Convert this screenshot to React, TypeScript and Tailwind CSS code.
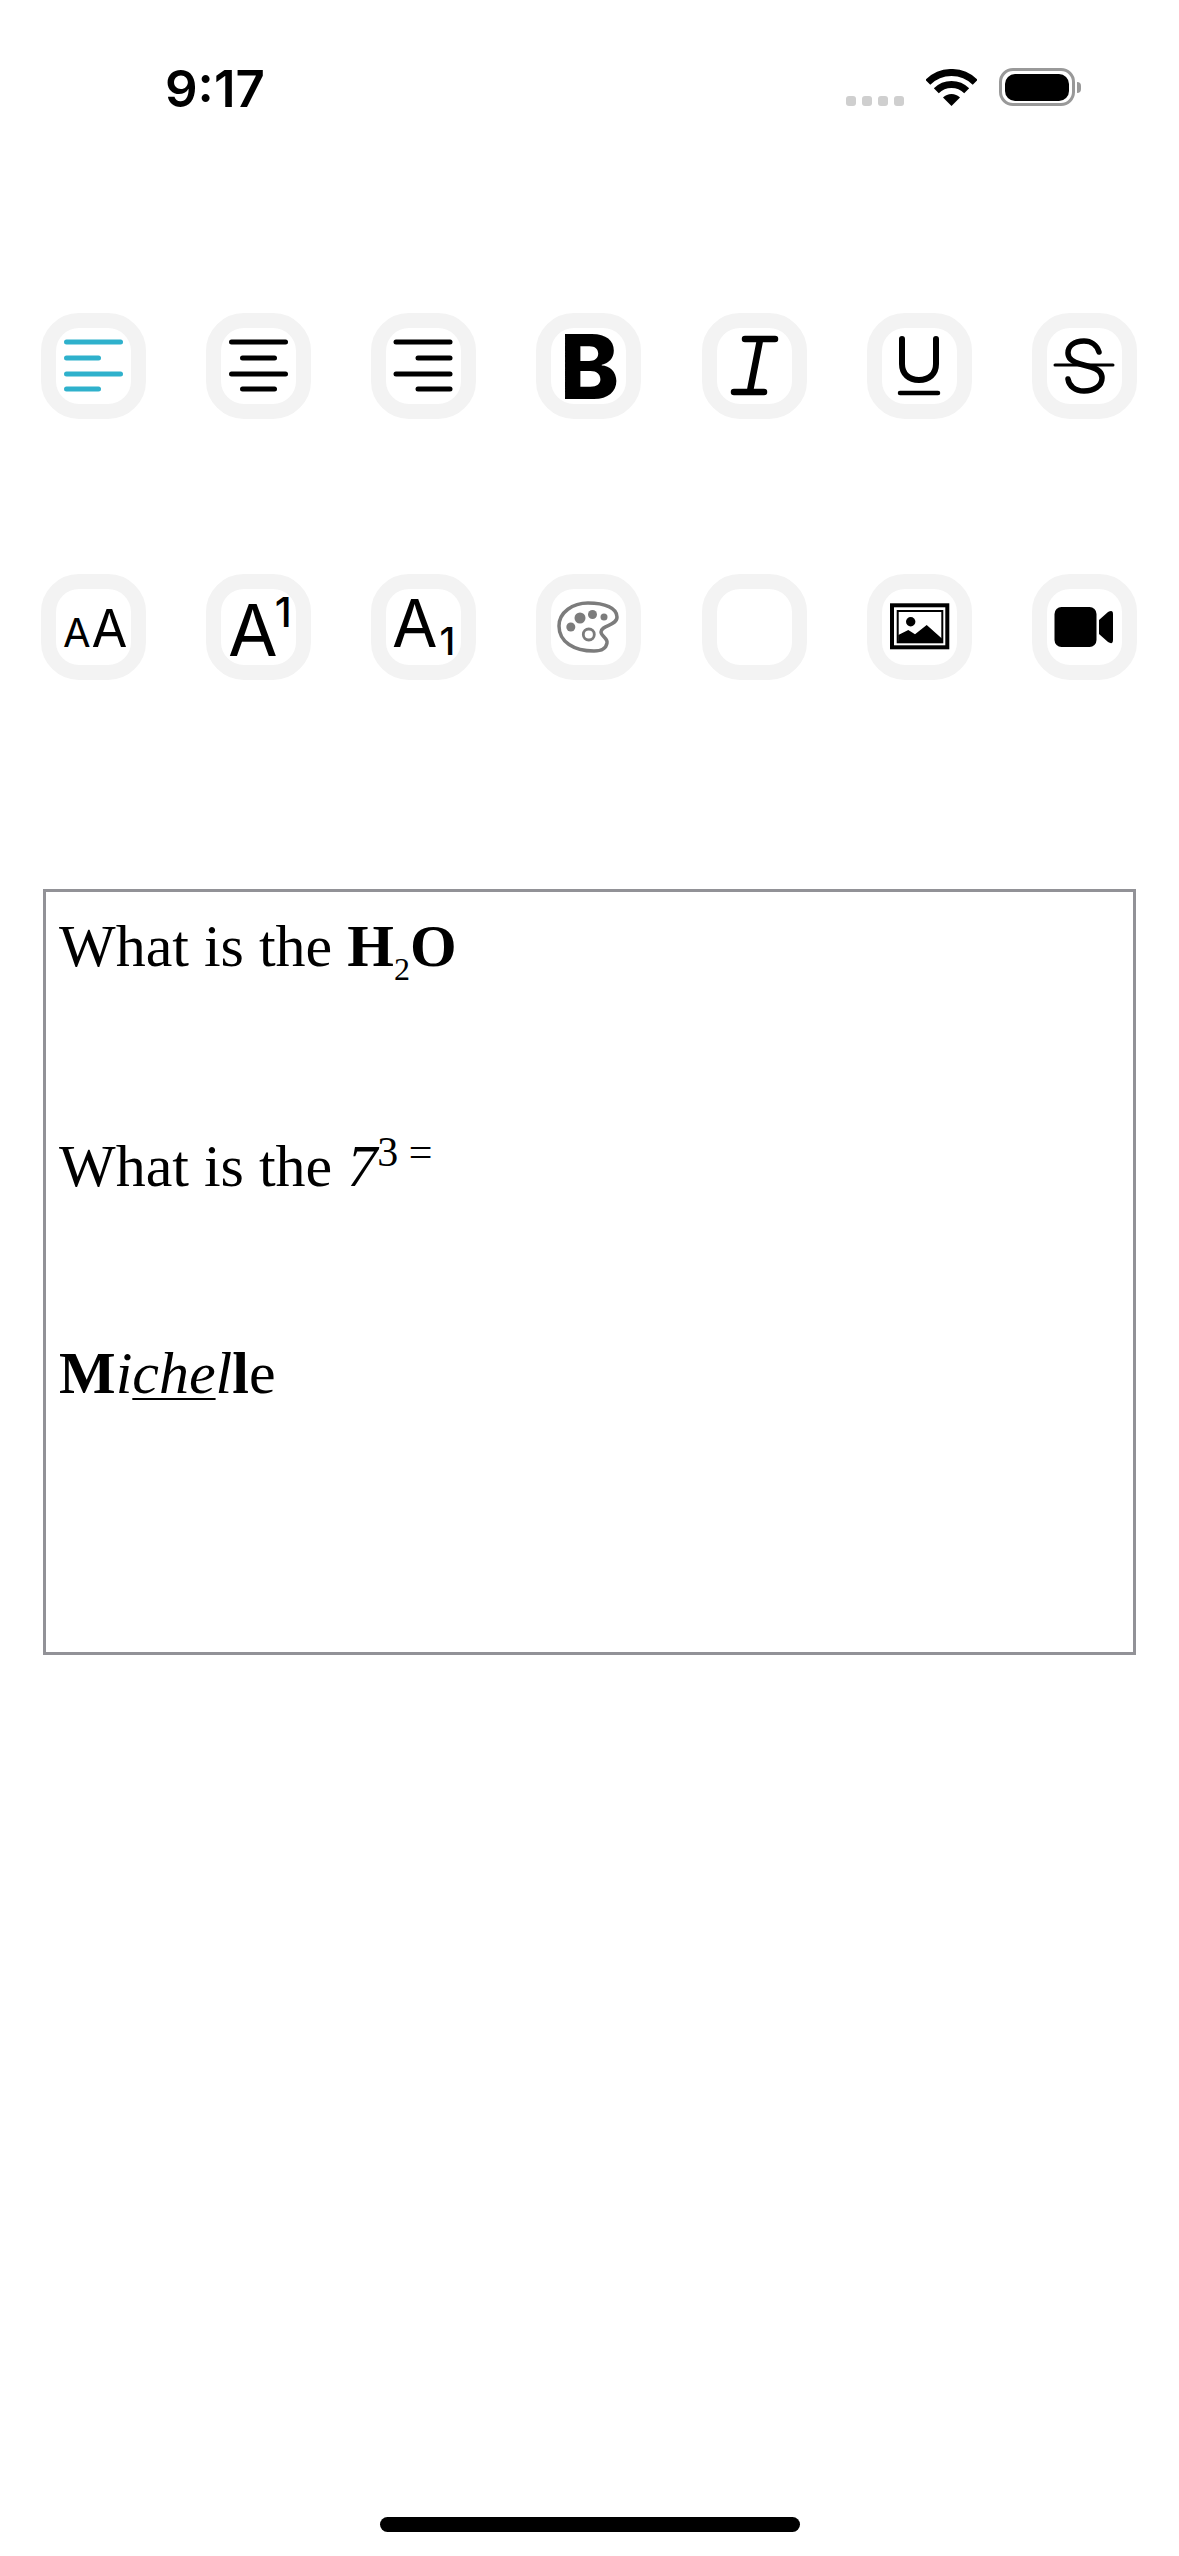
import React from 'react';

const INK = '#000000';

const AlignLines: React.FC<{ starts: number[]; color?: string }> = ({ starts, color = INK }) => (
  <svg viewBox="0 0 76 76" className="block h-[76px] w-[76px]">
    {[0, 1, 2, 3].map((i) => {
      const long = i % 2 === 0;
      const y = [14, 30, 46, 61][i];
      const x = starts[i];
      return <line key={i} x1={x + 2.5} x2={x + (long ? 59 : 37) - 2.5} y1={y} y2={y} stroke={color} strokeWidth={5} strokeLinecap="round" />;
    })}
  </svg>
);

const Icon: React.FC<{ children: React.ReactNode }> = ({ children }) => (
  <svg viewBox="0 0 76 76" className="block h-[76px] w-[76px] overflow-visible">
    {children}
  </svg>
);

const iconFont = '[font-family:Inter,sans-serif]';

const icons: React.ReactNode[][] = [
  [
    <AlignLines starts={[8, 8, 8, 8]} color="#2fb1cc" />,
    <AlignLines starts={[8, 19, 8, 19]} />,
    <AlignLines starts={[7.5, 29.5, 7.5, 29.5]} />,
    <Icon>
      <text x="9" y="71" fontSize="89" fontWeight="800" className={iconFont}>B</text>
    </Icon>,
    <Icon>
      <path d="M28 11H58M17 64H47M43 12L33 63" fill="none" stroke={INK} strokeWidth="6.5" strokeLinecap="round" />
    </Icon>,
    <Icon>
      <path d="M20 11V36C20 46 27 52 37 52C47 52 54 46 54 36V11" fill="none" stroke={INK} strokeWidth="6" strokeLinecap="round" />
      <line x1="18" x2="56" y1="65" y2="65" stroke={INK} strokeWidth="4.5" strokeLinecap="round" />
    </Icon>,
    <Icon>
      <path d="M52 24C50 17 44 13 37 13C27 13 21 18 21 25C21 31 26 34 33 36L44 39C51 41 55 45 55 50C55 58 47 63 37 63C28 63 22 58 21 51" fill="none" stroke={INK} strokeWidth="5.5" strokeLinecap="round" />
      <line x1="8" x2="66" y1="37" y2="37" stroke={INK} strokeWidth="3" strokeLinecap="round" />
    </Icon>,
  ],
  [
    <Icon>
      <text x="7" y="58" className={iconFont}>
        <tspan fontSize="40">A</tspan>
        <tspan fontSize="52" dx="1">A</tspan>
      </text>
    </Icon>,
    <Icon>
      <text x="7" y="67" className={iconFont}>
        <tspan fontSize="72">A</tspan>
        <tspan fontSize="41" fontWeight="500" dx="-3" dy="-29">1</tspan>
      </text>
    </Icon>,
    <Icon>
      <text x="6" y="58" className={iconFont}>
        <tspan fontSize="66">A</tspan>
        <tspan fontSize="38" fontWeight="500" dx="2" dy="8">1</tspan>
      </text>
    </Icon>,
    <Icon>
      <path d="M8 37C8 23 22 14 37 14C54 14 66 19 66 28C66 37 50 36 50 43C50 47 57 49 56 54C55 60 49 62 43 62C23 62 8 53 8 37Z" fill="none" stroke="#7c7c7c" strokeWidth="3.5" />
      <circle cx="29" cy="29" r="5.5" fill="#7c7c7c" />
      <circle cx="41.5" cy="25.5" r="4.5" fill="#7c7c7c" />
      <circle cx="53" cy="28" r="3.5" fill="#7c7c7c" />
      <circle cx="19.8" cy="38" r="4.5" fill="#7c7c7c" />
      <circle cx="37.8" cy="45.5" r="5.5" fill="none" stroke="#7c7c7c" strokeWidth="2.8" />
    </Icon>,
    null,
    <Icon>
      <rect x="10" y="16.3" width="55.3" height="42" fill="none" stroke={INK} strokeWidth="4" />
      <rect x="15.7" y="22" width="44.6" height="31.3" fill="none" stroke={INK} strokeWidth="2" />
      <circle cx="28.7" cy="32.7" r="4.7" fill={INK} />
      <path d="M16.3 46L26.3 41L33 45.3L44.7 36L60.7 50.3V54H16.3Z" fill={INK} />
    </Icon>,
    <Icon>
      <rect x="7.5" y="18" width="42" height="40" rx="7" fill={INK} />
      <path d="M52 31L61 23Q66 20 66 25V51Q66 56 61 53L52 45Z" fill={INK} />
    </Icon>,
  ],
];

const ToolRow: React.FC<{ items: React.ReactNode[]; className: string }> = ({ items, className }) => (
  <div className={`flex justify-between pl-[41px] pr-[42px] ${className}`}>
    {items.map((icon, i) => (
      <div key={i} className="box-border h-[106px] w-[105px] rounded-[38px] border-[15px] border-[#f3f3f3] bg-white">
        {icon}
      </div>
    ))}
  </div>
);

const StatusBar: React.FC = () => (
  <div className="flex h-[120px] pl-[165px] pr-[98px] pt-[59px]">
    <span className="text-[51px] leading-[60px] font-semibold text-black [font-family:Inter,sans-serif]">9:17</span>
    <div className="ml-auto flex items-start">
      <div className="mt-[37px] flex gap-[6px]">
        {[0, 1, 2, 3].map((i) => (
          <span key={i} className="h-[10px] w-[10px] rounded-[3px] bg-[#cfcfcf]" />
        ))}
      </div>
      <svg viewBox="0 0 51 37" className="ml-[22px] mt-[10px] h-[37px] w-[51px]">
        <path d="M25.5 37L17 28.5A12 12 0 0 1 34 28.5Z" fill={INK} />
        <path d="M10.3 21.8A21.5 21.5 0 0 1 40.7 21.8" fill="none" stroke={INK} strokeWidth="7" />
        <path d="M1.8 13.3A33.5 33.5 0 0 1 49.2 13.3" fill="none" stroke={INK} strokeWidth="7" />
      </svg>
      <div className="ml-[22px] mt-[9px] box-border flex h-[38px] w-[76px] items-center justify-center rounded-[14px] border-[3px] border-[#999999]">
        <div className="h-[27px] w-[64px] rounded-[10px] bg-black" />
      </div>
      <div className="ml-[2px] mt-[23px] h-[11px] w-[4px] rounded-r-[4px] bg-[#999999]" />
    </div>
  </div>
);

const Line: React.FC<{ children: React.ReactNode; className?: string }> = ({ children, className = '' }) => (
  <div className={`h-[69px] whitespace-pre text-[60px] leading-[69px] text-black ${className}`}>{children}</div>
);

const Editor: React.FC = () => (
  <div className="mx-[43px] mt-[209px] box-border h-[766px] border-[3px] border-[#929297] px-[13px] pt-[20px] [font-family:'Liberation_Serif',serif]">
    <Line>
      What is the <b>H</b>
      <span className="align-[-14px] text-[32px] leading-none">2</span>
      <b>O</b>
    </Line>
    <Line className="mt-[150px]">
      What is the <i>7</i>
      <span className="align-[20px] text-[42px] leading-none">3 =</span>
    </Line>
    <Line className="mt-[139px]">
      <b>M</b>
      <i>i</i>
      <i className="underline decoration-2 underline-offset-[5px]">che</i>
      <i>l</i>
      <b>l</b>e
    </Line>
  </div>
);

export default function App() {
  return (
    <div className="flex min-h-screen flex-col bg-white">
      <StatusBar />
      <ToolRow items={icons[0]} className="mt-[193px]" />
      <ToolRow items={icons[1]} className="mt-[155px]" />
      <Editor />
      <div className="mx-auto mb-[24px] mt-auto h-[15px] w-[420px] rounded-full bg-black" />
    </div>
  );
}
